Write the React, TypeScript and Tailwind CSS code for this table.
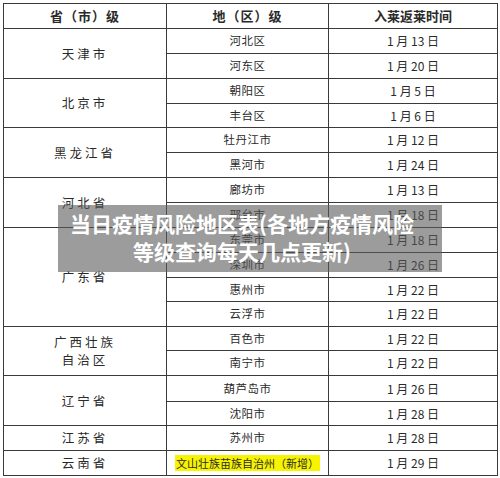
import React from 'react';

interface Row {
  city: React.ReactNode;
  date: string;
}

interface Group {
  province: React.ReactNode;
  rows: Row[];
}

const groups: Group[] = [
  { province: '天津市', rows: [{ city: '河北区', date: '13' }, { city: '河东区', date: '20' }] },
  { province: '北京市', rows: [{ city: '朝阳区', date: '5' }, { city: '丰台区', date: '6' }] },
  { province: '黑龙江省', rows: [{ city: '牡丹江市', date: '12' }, { city: '黑河市', date: '24' }] },
  { province: '河北省', rows: [{ city: '廊坊市', date: '13' }, { city: '邢台市', date: '18' }] },
  {
    province: '广东省',
    rows: [
      { city: '东莞市', date: '18' },
      { city: '深圳市', date: '26' },
      { city: '惠州市', date: '22' },
      { city: '云浮市', date: '22' },
    ],
  },
  {
    province: (
      <>
        广西壮族
        <br />
        自治区
      </>
    ),
    rows: [{ city: '百色市', date: '22' }, { city: '南宁市', date: '22' }],
  },
  { province: '辽宁省', rows: [{ city: '葫芦岛市', date: '26' }, { city: '沈阳市', date: '28' }] },
  { province: '江苏省', rows: [{ city: '苏州市', date: '28' }] },
  {
    province: '云南省',
    rows: [
      {
        city: <span className="bg-[#f8f400] px-[1px] text-[11px] tracking-normal">文山壮族苗族自治州（新增）</span>,
        date: '29',
      },
    ],
  },
];

const rowSpan: Record<number, string> = {
  1: 'row-span-1',
  2: 'row-span-2',
  4: 'row-span-4',
};

export default function App() {
  let rowIndex = 2;

  return (
    <div
      className="relative w-[500px] h-[478px] bg-white overflow-hidden"
      style={{ fontFamily: '"Noto Sans CJK SC", "Noto Sans", sans-serif' }}
    >
      <div className="pt-[3px] pl-[3px]">
        {/* row tracks = line spacing minus the 1px rule */}
        <div className="grid w-[495px] grid-cols-[162px_161px_168px] grid-rows-[24px_24px_24px_24px_23px_24px_24px_24px_24px_24px_24px_23px_24px_23px_24px_25px_23px_24px_24px] gap-px bg-[#3a3a3a] p-px text-[#2a2a2a]">
          {/* Header */}
          <div className="flex items-center justify-center bg-white text-[13px] font-bold tracking-[1px]">
            省（市）级
          </div>
          <div className="flex items-center justify-center bg-white text-[13px] font-bold tracking-[1px]">
            地（区）级
          </div>
          <div className="flex items-center justify-center bg-white text-[13px] font-bold">入莱返莱时间</div>

          {groups.map((g, gi) => {
            const start = rowIndex;
            rowIndex += g.rows.length;
            return (
              <React.Fragment key={gi}>
                <div
                  className={`col-start-1 flex items-center justify-center bg-white text-center text-[12.5px] leading-[18px] tracking-[3px] ${rowSpan[g.rows.length]}`}
                  style={{ gridRowStart: start }}
                >
                  {g.province}
                </div>
                {g.rows.map((r, ri) => (
                  <React.Fragment key={ri}>
                    <div
                      className="col-start-2 flex items-center justify-center bg-white text-[11.5px] tracking-[0.5px]"
                      style={{ gridRowStart: start + ri }}
                    >
                      {r.city}
                    </div>
                    <div
                      className="col-start-3 flex items-center justify-center bg-white text-[12px]"
                      style={{ gridRowStart: start + ri }}
                    >
                      1 月 {r.date} 日
                    </div>
                  </React.Fragment>
                ))}
              </React.Fragment>
            );
          })}
        </div>
      </div>

      {/* Title overlay */}
      <div className="absolute left-[58px] top-[205px] h-[67px] w-[384px] bg-[rgba(90,90,90,0.6)] pt-[4px] pr-[16px] text-center text-[21px] font-bold leading-[28px] text-white">
        <div>当日疫情风险地区表(各地方疫情风险</div>
        <div>等级查询每天几点更新)</div>
      </div>
    </div>
  );
}
